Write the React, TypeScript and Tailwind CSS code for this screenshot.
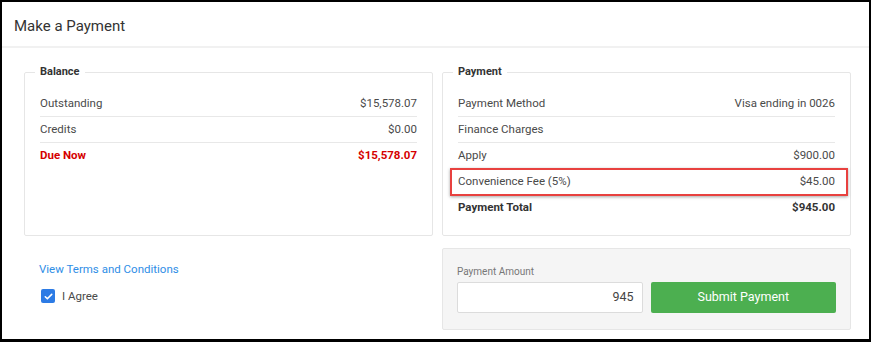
import React from 'react'

const font = { fontFamily: 'Roboto, "Noto Sans", Arial, sans-serif' }

type RowProps = {
  label: string
  value?: string
  tone?: 'normal' | 'bold' | 'red'
  last?: boolean
  highlight?: boolean
}

function Row({ label, value = '', tone = 'normal', last = false, highlight = false }: RowProps) {
  const toneClass =
    tone === 'red'
      ? 'font-bold text-[#d50000]'
      : tone === 'bold'
        ? 'font-bold text-[#333]'
        : 'text-[#4a4a4a]'

  return (
    <div
      className={`relative flex h-[26px] items-center justify-between text-[11.5px] ${toneClass} ${
        last ? '' : 'border-b border-[#e8e8e8]'
      }`}
    >
      <span>{label}</span>
      <span>{value}</span>
      {highlight && (
        <div className="pointer-events-none absolute -top-[1px] -bottom-[2px] -left-2 -right-[13px] border-2 border-[#e8413f] shadow-[0_1px_3px_rgba(0,0,0,0.35)]" />
      )}
    </div>
  )
}

function Panel({ title, children }: { title: string; children: React.ReactNode }) {
  return (
    <fieldset className="rounded-[2px] border border-[#e6e6e6] px-[15px] pt-[11px] pb-[14px]">
      <legend className="-ml-[5px] px-[5px] text-[11px] leading-[16px] font-bold text-[#333]">{title}</legend>
      {children}
    </fieldset>
  )
}

export default function App() {
  return (
    <div
      className="box-border flex h-[342px] w-[871px] flex-col border-2 border-b-[3px] border-black bg-white"
      style={font}
    >
      {/* Header */}
      <div className="flex h-[46px] shrink-0 items-center border-b-2 border-[#f1f1f1] pt-[4px] pl-3">
        <h1 className="text-[15px] text-[#333]">Make a Payment</h1>
      </div>

      <div className="grid grid-cols-2 gap-[9px] pt-[16px] pr-[18px] pl-[22px]">
        <Panel title="Balance">
          <Row label="Outstanding" value="$15,578.07" />
          <Row label="Credits" value="$0.00" />
          <Row label="Due Now" value="$15,578.07" tone="red" last />
        </Panel>

        <Panel title="Payment">
          <Row label="Payment Method" value="Visa ending in 0026" />
          <Row label="Finance Charges" />
          <Row label="Apply" value="$900.00" />
          <Row label="Convenience Fee (5%)" value="$45.00" highlight />
          <Row label="Payment Total" value="$945.00" tone="bold" last />
        </Panel>

        {/* Terms */}
        <div className="pt-[16px] pl-[15px]">
          <a className="block text-[11.5px] leading-[16px] text-[#2f8ee6]">View Terms and Conditions</a>
          <label className="mt-[11px] flex items-center gap-[7px] pl-[2px] text-[11.5px] leading-[16px] text-[#4a4a4a]">
            <span className="flex h-[14px] w-[14px] items-center justify-center rounded-[2px] bg-[#2c7be5]">
              <svg viewBox="0 0 24 24" className="h-[11px] w-[11px]" fill="none" stroke="white" strokeWidth="3.5" strokeLinecap="round" strokeLinejoin="round">
                <path d="M5 12.5l4.5 4.5L19 7.5" />
              </svg>
            </span>
            I Agree
          </label>
        </div>

        {/* Payment amount */}
        <div className="mt-[3px] rounded-[2px] border border-[#e6e6e6] bg-[#f5f5f5] px-[14px] pt-[15px] pb-[16px]">
          <div className="text-[10px] leading-[16px] text-[#777]">Payment Amount</div>
          <div className="mt-[2px] grid grid-cols-2 gap-2">
            <div className="box-border flex h-[31px] items-center justify-end rounded-[2px] border border-[#dcdcdc] bg-white pr-[8px] text-[12.5px] text-[#444]">
              945
            </div>
            <button className="h-[31px] rounded-[2px] bg-[#4caf50] text-[12.5px] text-white">Submit Payment</button>
          </div>
        </div>
      </div>
    </div>
  )
}
